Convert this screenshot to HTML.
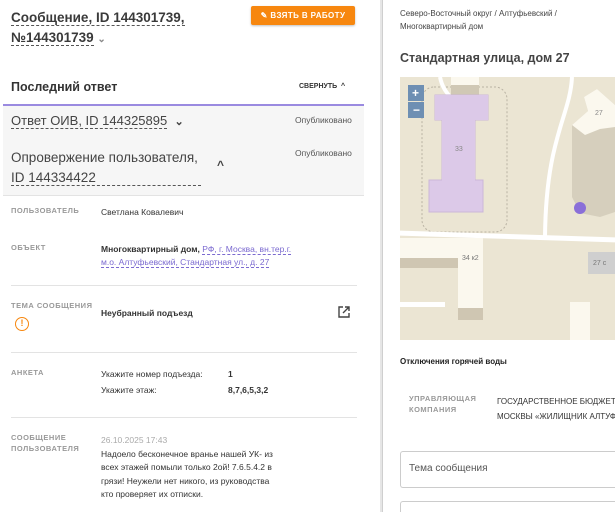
<!DOCTYPE html>
<html><head><meta charset="utf-8"><style>
*{margin:0;padding:0;box-sizing:border-box}
body{width:615px;height:512px;overflow:hidden;background:#fff;font-family:"Liberation Sans","Noto Sans CJK SC",sans-serif;color:#333;position:relative}
.a{position:absolute;white-space:nowrap}
.lbl{font-size:7.5px;color:#999;letter-spacing:.5px;font-weight:bold;line-height:14px}
.v{font-size:8.5px;color:#333}
.sep{position:absolute;left:11px;width:346px;height:1px;background:#e3e3e3}
.du{border-bottom:1px dashed #555}
</style></head><body>
<div class="a" style="left:11px;top:8px;font-size:13.5px;font-weight:bold;color:#3a3a3a;line-height:20px"><span class="du">Сообщение, ID 144301739,</span></div>
<div class="a" style="left:11px;top:28px;font-size:13.5px;font-weight:bold;color:#3a3a3a;line-height:20px"><span class="du">№144301739</span> <span style="font-size:10px;color:#888">⌄</span></div>
<div class="a" style="left:251px;top:6px;width:104px;height:19px;background:#f7870f;border-radius:2px;box-shadow:0 1px 2px rgba(0,0,0,.25);color:#fff;font-size:8px;font-weight:bold;line-height:19px;text-align:center;letter-spacing:.4px">✎ ВЗЯТЬ В РАБОТУ</div>
<div class="a" style="left:11px;top:80px;font-size:12.5px;font-weight:bold;color:#333">Последний ответ</div>
<div class="a" style="left:299px;top:83px;font-size:7px;font-weight:bold;color:#333">СВЕРНУТЬ &nbsp;^</div>
<div class="a" style="left:3px;top:104px;width:361px;height:2px;background:#9a8ae0"></div>
<div class="a" style="left:3px;top:106px;width:361px;height:90px;background:#f6f6f6;border-bottom:1px solid #e3e3e3"></div>
<div class="a" style="left:11px;top:112px;font-size:13px;color:#444;line-height:18px"><span class="du">Ответ ОИВ, ID 144325895</span> &nbsp;<b style="font-size:11px">⌄</b></div>
<div class="a" style="left:295px;top:115px;font-size:8.5px;color:#555">Опубликовано</div>
<div class="a" style="left:11px;top:148px;font-size:13.5px;color:#444;line-height:20px">Опровержение пользователя,<br><span class="du" style="padding-right:105px">ID 144334422</span></div>
<div class="a" style="left:217px;top:158px;font-size:12px;font-weight:bold;color:#444">^</div>
<div class="a" style="left:295px;top:148px;font-size:8.5px;color:#555">Опубликовано</div>
<div class="a lbl" style="left:11px;top:204px">ПОЛЬЗОВАТЕЛЬ</div>
<div class="a v" style="left:101px;top:207px">Светлана Ковалевич</div>
<div class="a lbl" style="left:11px;top:241px">ОБЪЕКТ</div>
<div class="a v" style="left:101px;top:243px;line-height:13px"><b>Многоквартирный дом,</b> <span style="color:#7b6ad0;border-bottom:1px dashed #7b6ad0">РФ, г. Москва, вн.тер.г.</span><br><span style="color:#7b6ad0;border-bottom:1px dashed #7b6ad0">м.о. Алтуфьевский, Стандартная ул., д. 27</span></div>
<div class="sep" style="top:285px"></div>
<div class="a lbl" style="left:11px;top:299px">ТЕМА СООБЩЕНИЯ</div>
<div class="a" style="left:15px;top:317px;width:14px;height:14px;border:1.5px solid #f7870f;border-radius:50%;color:#f7870f;font-size:9px;font-weight:bold;text-align:center;line-height:11px">!</div>
<div class="a v" style="left:101px;top:308px;font-weight:bold">Неубранный подъезд</div>
<svg class="a" style="left:338px;top:306px" width="12" height="12" viewBox="0 0 12 12"><path d="M5 1H1v10h10V7" fill="none" stroke="#444" stroke-width="1.4"/><path d="M7 1h4v4M11 1L5 7" fill="none" stroke="#444" stroke-width="1.4"/></svg>
<div class="sep" style="top:352px"></div>
<div class="a lbl" style="left:11px;top:366px">АНКЕТА</div>
<div class="a v" style="left:101px;top:369px">Укажите номер подъезда:</div>
<div class="a v" style="left:228px;top:369px;font-weight:bold">1</div>
<div class="a v" style="left:101px;top:385px">Укажите этаж:</div>
<div class="a v" style="left:228px;top:385px;font-weight:bold">8,7,6,5,3,2</div>
<div class="sep" style="top:417px"></div>
<div class="a lbl" style="left:11px;top:432px;line-height:11px">СООБЩЕНИЕ<br>ПОЛЬЗОВАТЕЛЯ</div>
<div class="a v" style="left:101px;top:434px;line-height:13.5px"><span style="color:#aaa">26.10.2025 17:43</span><br>Надоело бесконечное вранье нашей УК- из<br>всех этажей помыли только 2ой! 7.6.5.4.2 в<br>грязи! Неужели нет никого, из руководства<br>кто проверяет их отписки.</div>
<div class="a" style="left:380px;top:0;width:3px;height:512px;background:#e6e6e6;border-right:1px solid #cfcfcf"></div>
<div class="a" style="left:400px;top:7px;font-size:8px;color:#444;line-height:13px">Северо-Восточный округ / Алтуфьевский /<br>Многоквартирный дом</div>
<div class="a" style="left:400px;top:51px;font-size:12.5px;font-weight:bold;color:#444">Стандартная улица, дом 27</div>
<svg class="a" style="left:400px;top:77px" width="215" height="263" viewBox="0 0 215 263">
<rect width="215" height="263" fill="#ebe5d3"/>
<rect x="22" y="10" width="85" height="145" rx="12" fill="none" stroke="#b9b2a3" stroke-dasharray="2 2"/>
<path d="M-5 156 L220 163" stroke="#fff" stroke-width="5"/>
<path d="M172 0 C170 40 146 60 145 160" stroke="#fff" stroke-width="4" fill="none"/>
<path d="M40 0 C42 10 46 15 52 22" stroke="#fff" stroke-width="4" fill="none"/>
<rect x="0" y="161" width="83" height="20" fill="#fbf8ee"/>
<rect x="0" y="181" width="60" height="10" fill="#cfc6b2"/>
<rect x="58" y="161" width="25" height="70" fill="#fbf8ee"/>
<rect x="58" y="231" width="25" height="12" fill="#cfc6b2"/>
<text x="62" y="183" font-size="7" fill="#777" font-family="Liberation Sans">34 к2</text>
<rect x="0" y="225" width="45" height="5" fill="#fff"/>
<rect x="51" y="0" width="28" height="30" fill="#d0c8b5"/>
<rect x="51" y="0" width="28" height="8" fill="#fbf8ee"/>
<rect x="35" y="18" width="53" height="25" fill="#dcc9e8" stroke="#cbb6d8"/>
<rect x="42" y="43" width="33" height="60" fill="#dcc9e8" stroke="#cbb6d8"/>
<rect x="29" y="103" width="54" height="32" fill="#dcc9e8" stroke="#cbb6d8"/>
<rect x="35" y="18" width="53" height="25" fill="#dcc9e8"/>
<rect x="42" y="42" width="33" height="62" fill="#dcc9e8"/>
<text x="55" y="74" font-size="7" fill="#888" font-family="Liberation Sans">33</text>
<path d="M172 48 L188 34 L184 20 L197 12 L215 28 V135 L200 140 L180 136 L172 120 Z" fill="#d6cfbd"/>
<path d="M172 48 L188 34 L184 20 L197 12 L215 28 V50 L200 52 L185 58 L172 48Z" fill="#fbf8ee"/>
<text x="195" y="38" font-size="7" fill="#888" font-family="Liberation Sans">27</text>
<circle cx="180" cy="131" r="6" fill="#8a6fd8"/>
<rect x="188" y="175" width="27" height="22" fill="#cfcfcf"/>
<text x="193" y="188" font-size="7" fill="#777" font-family="Liberation Sans">27 с</text>
<rect x="170" y="225" width="20" height="38" fill="#fbf8ee"/>
<rect x="8" y="8" width="16" height="16" fill="#6e8fb3"/><rect x="8" y="25" width="16" height="16" fill="#6e8fb3"/>
<text x="12" y="20" font-size="12" fill="#fff" font-weight="bold" font-family="Liberation Sans">+</text>
<text x="13" y="37" font-size="12" fill="#fff" font-weight="bold" font-family="Liberation Sans">−</text>
</svg>
<div class="a" style="left:400px;top:357px;font-size:8px;font-weight:bold;color:#222">Отключения горячей воды</div>
<div class="a lbl" style="left:409px;top:393px;line-height:11px">УПРАВЛЯЮЩАЯ<br>КОМПАНИЯ</div>
<div class="a" style="left:497px;top:394px;font-size:8px;color:#333;line-height:15px;width:118px;overflow:hidden">ГОСУДАРСТВЕННОЕ БЮДЖЕТНОЕ<br>МОСКВЫ «ЖИЛИЩНИК АЛТУФЬЕВСКИЙ»</div>
<div class="a" style="left:400px;top:451px;width:215px;height:37px;border:1px solid #ccc;border-right:none;border-radius:3px 0 0 3px;font-size:10px;color:#555;padding:11px 0 0 8px">Тема сообщения</div>
<div class="a" style="left:400px;top:501px;width:215px;height:11px;border:1px solid #ccc;border-right:none;border-bottom:none;border-radius:3px 0 0 0"></div>
</body></html>
